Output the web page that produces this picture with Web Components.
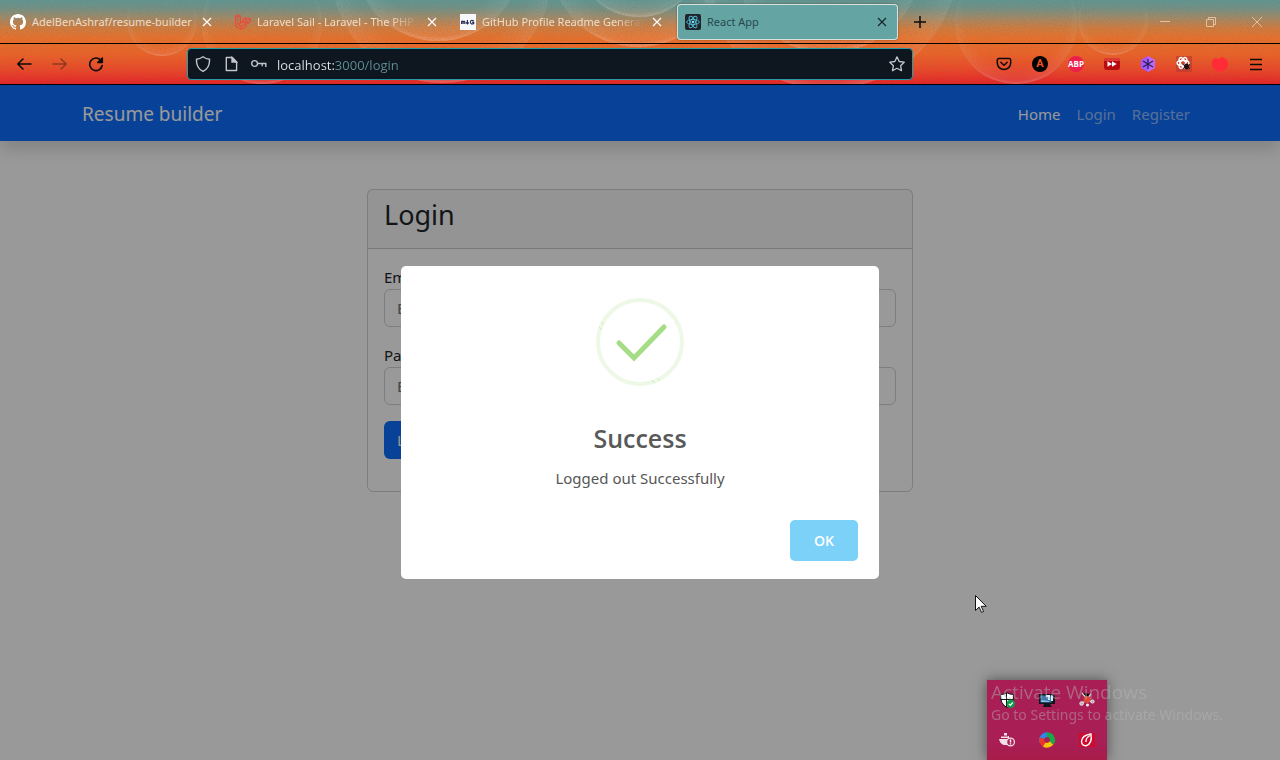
<!DOCTYPE html>
<html lang="en">
<head>
<meta charset="utf-8">
<title>React App</title>
<style>
  html, body { height: 100%; margin: 0; }
  body { font-family: "Noto Sans", "Open Sans", sans-serif; font-size: 15px; line-height: 24px; color: #212529; overflow: hidden; }
</style>
</head>
<body>
<browser-window>
  <browser-tab slot="tab" label="AdelBenAshraf/resume-builder">
    <svg slot="icon" viewBox="0 0 16 16" width="16" height="16"><path fill="#fff" d="M8 0C3.58 0 0 3.58 0 8c0 3.54 2.29 6.53 5.47 7.59.4.07.55-.17.55-.38v-1.49c-2.01.37-2.53-.49-2.69-.94-.09-.23-.48-.94-.82-1.13-.28-.15-.68-.52-.01-.53.63-.01 1.08.58 1.23.82.72 1.21 1.87.87 2.33.66.07-.52.28-.87.51-1.07-1.78-.2-3.64-.89-3.64-3.95 0-.87.31-1.59.82-2.15-.08-.2-.36-1.02.08-2.12 0 0 .67-.21 2.2.82a7.6 7.6 0 0 1 4 0c1.53-1.04 2.2-.82 2.2-.82.44 1.1.16 1.92.08 2.12.51.56.82 1.27.82 2.15 0 3.07-1.87 3.75-3.65 3.95.29.25.54.73.54 1.48v2.2c0 .21.15.46.55.38A8 8 0 0 0 16 8c0-4.42-3.58-8-8-8z"/></svg>
  </browser-tab>
  <browser-tab slot="tab" label="Laravel Sail - Laravel - The PHP" faded>
    <svg slot="icon" viewBox="0 0 16 16" width="16" height="16" fill="none" stroke="#f04438" stroke-width="1"><path d="M.6 2 3 .7 5.4 2v7L8 7.500V4.800l2.600-1.500M.6 2v10.400L6 15.400l5-2.900V9.700M.6 2 3 3.400 5.400 2M3 3.400v7.200l3 1.700v3M3 10.600l5-2.900 3 2M6 12.300l5-2.800M10.300 5l2.500-1.500L15.400 5v2.800L12.800 9.300 10.300 7.900zM10.300 5l2.500 1.400L15.400 5M12.800 6.400v2.900M11 9.700l-3-2"/></svg>
  </browser-tab>
  <browser-tab slot="tab" label="GitHub Profile Readme Generat" faded>
    <svg slot="icon" viewBox="0 0 16 16" width="16" height="16"><path fill="#f6f7fb" d="M0 0h16v16H0z"/><path fill="none" stroke="#2b2f55" stroke-width="1.200" d="M1.600 10V7.200M1.600 7.600q1.400-1 1.500.4v2M3.100 8q1.500-1.400 1.700 0v2M7.400 6v4M6.100 8.500l1.300 1.400 1.300-1.400M13.800 6.900q-3.300-1.500-3.400 1.200 0 2.500 3.300 1.500V8.300h-1.500"/></svg>
  </browser-tab>
  <browser-tab slot="tab" label="React App" active>
    <svg slot="icon" viewBox="0 0 16 16" width="16" height="16" fill="none" stroke="#53bcd8" stroke-width=".9"><rect width="16" height="16" rx="2" fill="#20232a" stroke="none"/><ellipse cx="8" cy="8" rx="6.400" ry="2.500"/><ellipse cx="8" cy="8" rx="6.400" ry="2.500" transform="rotate(60 8 8)"/><ellipse cx="8" cy="8" rx="6.400" ry="2.500" transform="rotate(120 8 8)"/><circle cx="8" cy="8" r="1.300" fill="#7fe3f7" stroke="none"/></svg>
  </browser-tab>
  <address-bar slot="address" value="localhost:3000/login"></address-bar>
  <login-page></login-page>
  <alert-dialog slot="overlay" heading="Success" message="Logged out Successfully"></alert-dialog>
</browser-window>
<tray-popup></tray-popup>
<activation-notice></activation-notice>
<mouse-pointer></mouse-pointer>

<script>
const define = (name, html, setup) => {
  const template = document.createElement('template');
  template.innerHTML = html;
  customElements.define(name, class extends HTMLElement {
    constructor() {
      super();
      this.attachShadow({ mode: 'open' }).append(template.content.cloneNode(true));
    }
    connectedCallback() { if (setup) setup(this, this.shadowRoot); }
  });
};

define('theme-art', `
<style>
  :host { display: block; position: absolute; inset: 0; overflow: hidden; z-index: -1;
    background: linear-gradient(#5c9795 0, #6f9287 8px, #a08a67 18px, #cf7c3e 28px, #e8702a 38px, #ec6226 54px, #eb4a27 68px, #e82327 84px); }
  svg { display: block; }
</style>
<svg width="1280" height="85" aria-hidden="true">
  <defs>
    <radialGradient id="b" cx=".5" cy=".42" r=".58">
      <stop offset=".75" stop-color="#fff" stop-opacity="0"/>
      <stop offset=".95" stop-color="#fff" stop-opacity=".09"/>
      <stop offset="1" stop-color="#fff" stop-opacity=".28"/>
    </radialGradient>
    <filter id="n" x="0" y="0" width="100%" height="100%">
      <feTurbulence type="fractalNoise" baseFrequency=".7" numOctaves="2"/>
      <feColorMatrix values="0 0 0 0 .3  0 0 0 0 .15  0 0 0 0 .1  1.200 0 0 0 -.5"/>
    </filter>
  </defs>
  <g fill="url(#b)">
    <circle cx="162" cy="21" r="35"/><circle cx="262" cy="24" r="60"/>
    <circle cx="442" cy="-27" r="110"/><circle cx="438" cy="-43" r="84"/>
    <circle cx="639" cy="-47" r="64"/><circle cx="638" cy="-41" r="88"/>
    <circle cx="828" cy="-42" r="131"/><circle cx="828" cy="-42" r="95"/>
    <circle cx="1016" cy="23" r="61"/><circle cx="1113" cy="20" r="35"/>
  </g>
  <rect width="1280" height="85" filter="url(#n)" opacity=".7"/>
</svg>`);

define('browser-window', `
<style>
  :host { display: flex; flex-direction: column; min-height: 100vh; }
  header { position: relative; z-index: 0; }
  .tabs { display: flex; align-items: center; height: 43px; border-bottom: 1px solid #000; }
  .tools { display: flex; align-items: center; height: 40px; padding: 0 6px; border-bottom: 1px solid #000; }
  .view { position: relative; flex: 1; display: flex; flex-direction: column; background: #fff; }
  .grow { flex: 1; }
  slot[name=address] { display: block; flex: 1; margin: 0 73px; }
  button { display: grid; place-items: center; padding: 0; border: 0; background: none; width: 36px; height: 36px; color: #0b0b0b; }
  .new { width: 40px; }
  .win button { width: 46px; color: #e3c1a0; }
  .win { display: flex; }
  svg { display: block; fill: none; stroke: currentColor; }
  svg.solid { stroke: none; }
  .abp { width: 16px; height: 16px; border-radius: 8px; background: #ed1e4c; color: #fff; font: 700 8px/16px "Open Sans", sans-serif; display: flex; justify-content: center; }
  .ang { width: 16px; height: 16px; border-radius: 8px; background: #000; color: #f0522a; font: 700 11px/16px Roboto, sans-serif; }
</style>
<header>
  <theme-art></theme-art>
  <div class="tabs">
    <slot name="tab"></slot>
    <button class="new" aria-label="New tab"><svg width="14" height="14" stroke-width="1.500"><path d="M7 1v12M1 7h12"/></svg></button>
    <span class="grow"></span>
    <div class="win">
      <button aria-label="Minimize"><svg width="12" height="12"><path d="M1 5.500h10"/></svg></button>
      <button aria-label="Restore"><svg width="12" height="12"><path d="M1.500 3.500h7v7h-7zM3.500 3V1.500h7v7H9"/></svg></button>
      <button aria-label="Close"><svg width="12" height="12"><path d="M1 1l10 10M11 1 1 11"/></svg></button>
    </div>
  </div>
  <div class="tools">
    <button aria-label="Back"><svg width="16" height="16" stroke-width="1.600" stroke-linecap="round" stroke-linejoin="round"><path d="M15 8H2M7 3 1.800 8 7 13"/></svg></button>
    <button aria-label="Forward" style="color:#8d3a1d"><svg width="16" height="16" stroke-width="1.500" stroke-linecap="round" stroke-linejoin="round"><path d="M1 8h13M9 3l5.200 5L9 13"/></svg></button>
    <button aria-label="Reload"><svg width="16" height="16" stroke-width="1.600" stroke-linecap="round"><path d="M14.200 9.500A6.300 6.300 0 1 1 12.600 4"/><path d="M14.300 2v4.500H9.800z" fill="currentColor" stroke-linejoin="round"/></svg></button>
    <slot name="address"></slot>
    <button aria-label="Save to Pocket"><svg width="16" height="16" stroke-width="1.500" stroke-linecap="round" stroke-linejoin="round"><path d="M3 2.500h10q1.700 0 1.700 1.700V7A6.700 6.500 0 0 1 1.300 7V4.200q0-1.700 1.700-1.700zM4.800 6.300 8 9.300l3.200-3"/></svg></button>
    <button aria-label="Extension A"><span class="ang">A</span></button>
    <button aria-label="Adblock Plus"><span class="abp">ABP</span></button>
    <button aria-label="Fast forward"><svg class="solid" width="16" height="16"><rect y="2" width="16" height="12" rx="3" fill="#b80c10"/><path fill="#dc3a36" d="M3 2h10q3 0 3 3H0q0-3 3-3z"/><path fill="#fff" d="M3.500 5.200 8 8l-4.500 2.800zM8 5.200 12.700 8 8 10.800z"/></svg></button>
    <button aria-label="Extension hexagon"><svg class="solid" width="16" height="16"><path fill="#a457fa" d="M8 0l7 4v8l-7 4-7-4V4z"/><path fill="#d77af5" d="M8 0l7 4v8l-7 4z" opacity=".5"/><path stroke="#28205a" stroke-width="1.300" d="M8 3v10M3 5l10 6M13 5 3 11"/></svg></button>
    <button aria-label="React developer tools"><svg class="solid" width="16" height="16"><path fill="#b33b32" opacity=".6" d="M0 0h16v16H0z"/><g fill="none" stroke="#fff" stroke-width="1.400"><ellipse cx="7" cy="7" rx="6" ry="2.500"/><ellipse cx="7" cy="7" rx="6" ry="2.500" transform="rotate(60 7 7)"/><ellipse cx="7" cy="7" rx="6" ry="2.500" transform="rotate(120 7 7)"/></g><ellipse cx="10.500" cy="10.500" rx="2.400" ry="3" fill="#20100f"/><path stroke="#20100f" d="M7 8.500l7 4M14 8.500l-7 4"/></svg></button>
    <button aria-label="Extension"><svg class="solid" width="16" height="16"><path fill="#ff2b36" d="M1 3l3-1 3 1 3-2 4 2q4 5 0 10-6 5-12 0-4-4-1-10z"/></svg></button>
    <button aria-label="Menu"><svg width="14" height="14" stroke-width="1.300"><path d="M1 2.500h12M1 7.500h12M1 12.500h12"/></svg></button>
  </div>
</header>
<div class="view"><slot></slot><slot name="overlay"></slot></div>`);

define('browser-tab', `
<style>
  :host { display: block; flex: 0 1 225px; min-width: 0; color: #f0dcc6; }
  .tab { display: flex; align-items: center; gap: 6px; height: 36px; margin: 0 2px; padding: 0 8px; box-sizing: border-box; border-radius: 4px; }
  :host([active]) { color: #27484c; }
  :host([active]) .tab { background: #64a5a4; box-shadow: inset 0 0 0 1px #d9e0dd, 0 0 2px #0006; }
  .label { flex: 1; min-width: 0; white-space: nowrap; font-size: 11px; line-height: 20px; }
  :host([faded]) .label { -webkit-mask-image: linear-gradient(to left, transparent, #000 28px); mask-image: linear-gradient(to left, transparent, #000 28px); }
  button { display: grid; place-items: center; width: 16px; height: 16px; padding: 0; border: 0; background: none; color: #fff; }
  :host([active]) button { color: #16282a; }
</style>
<div class="tab"><slot name="icon"></slot><span class="label"></span>
<button aria-label="Close tab"><svg width="10" height="10" fill="none" stroke="currentColor" stroke-width="1.200"><path d="M1 1l8 8M9 1 1 9"/></svg></button></div>`,
(el, root) => { root.querySelector('.label').textContent = el.getAttribute('label'); });

define('address-bar', `
<style>
  :host { display: block; }
  .bar { display: flex; align-items: center; gap: 12px; height: 32px; box-sizing: border-box; padding: 0 7px; border: 1px solid #269ba8; border-radius: 4px; background: #0e1620; color: #c3c6ca; }
  svg { display: block; fill: none; stroke: currentColor; flex: none; }
  input { flex: 1; min-width: 0; height: 28px; padding: 2px 0 0; box-sizing: border-box; margin: 0 0 0 -2px; border: 0; outline: 0; font: 13px "Open Sans", sans-serif;
    color: #5f8f95; background: linear-gradient(to right, #e4e6e8 58px, #5f8f95 58px); -webkit-background-clip: text; background-clip: text; -webkit-text-fill-color: transparent; }
</style>
<div class="bar">
  <svg width="16" height="16" stroke-width="1.400"><path d="M8 .8Q11 3 14.500 3.300 15 12 8 15.300 1 12 1.500 3.300 5 3 8 .8z"/></svg>
  <svg width="16" height="16" stroke-width="1.400"><path d="M3.300 1.500h6L13.600 6v8.500H3.300z" stroke-linejoin="round"/><path d="M9 1.500V6h4.500z" fill="currentColor"/></svg>
  <svg width="16" height="16" stroke-width="1.400"><circle cx="3.600" cy="7.500" r="2.900"/><path d="M6.500 7.500h9M11.200 7.500v2.700M14.800 7.500v3.400"/></svg>
  <input type="text" aria-label="Address" spellcheck="false">
  <svg width="16" height="16" stroke-width="1.300" stroke-linejoin="round"><path d="M8 .9l2.200 4.600 5 .7-3.600 3.500.9 5L8 12.300l-4.500 2.400.9-5L.8 6.200l5-.7z"/></svg>
</div>`, (el, root) => { root.querySelector('input').value = el.getAttribute('value'); });

define('login-page', `
<style>
  :host { display: block; }
  nav { background: #0d6efd; box-shadow: 0 8px 16px rgba(0,0,0,.15); }
  .container { max-width: 1116px; margin: 0 auto; padding: 2px 12px 0; display: flex; align-items: center; justify-content: space-between; height: 54px; }
  a { color: rgba(255,255,255,.55); text-decoration: none; }
  .brand { color: #fff; font-size: 19px; line-height: 30px; }
  .links { display: flex; gap: 16px; padding: 0 8px; }
  .links a[aria-current] { color: #fff; }
  .card { width: 50%; max-width: 546px; box-sizing: border-box; margin: 48px auto 0; border: 1px solid rgba(0,0,0,.18); border-radius: 6px; }
  .head { background: rgba(0,0,0,.03); border-bottom: 1px solid rgba(0,0,0,.18); padding: 8px 16px 16px; }
  h3 { margin: 0; font-size: 27px; font-weight: 400; line-height: 34px; }
  form { padding: 16px; }
  label { display: block; color: #212529; }
  input { display: block; width: 100%; box-sizing: border-box; height: 38px; margin: 0 0 16px; padding: 6px 12px; border: 1px solid #ced4da; border-radius: 6px; font: inherit; background: none; }
  input::placeholder { color: #6c757d; }
  button { display: block; height: 38px; padding: 0 13px; margin: 0 0 16px; border: 0; border-radius: 6px; background: #0d6efd; color: #fff; font: inherit; }
</style>
<nav><div class="container">
  <a class="brand" href="#">Resume builder</a>
  <div class="links"><a href="#" aria-current="page">Home</a><a href="#login">Login</a><a href="#register">Register</a></div>
</div></nav>
<section class="card">
  <div class="head"><h3>Login</h3></div>
  <form onsubmit="return false">
    <label for="email">Email</label>
    <input id="email" type="email" placeholder="E">
    <label for="password">Password</label>
    <input id="password" type="password" placeholder="E">
    <button>Login</button>
  </form>
</section>`);

define('alert-dialog', `
<style>
  :host { position: absolute; inset: 0; display: grid; place-items: center; background: rgba(0,0,0,.4); }
  .modal { width: 478px; max-width: 90%; box-sizing: border-box; padding-top: 32px; background: #fff; border-radius: 5px; text-align: center; }
  svg { display: block; margin: 0 auto; }
  h2 { margin: 32px 0 0; font: 600 25px/40px "Open Sans", sans-serif; color: #595959; }
  p { margin: 8px 0 0; color: #575757; }
  footer { display: flex; justify-content: flex-end; padding: 30px 21px 18px; }
  button { height: 41px; width: 68px; padding: 0; border: 0; border-radius: 5px; background: #7cd1f9; color: #fff; font: 600 14px/20px "Open Sans", sans-serif; }
</style>
<div class="modal" role="dialog" aria-labelledby="t">
  <svg width="88" height="88" fill="none" aria-hidden="true">
    <circle cx="44" cy="44" r="42" stroke="#edf8e7" stroke-width="4"/>
    <path stroke="#b9e3a4" stroke-width=".6" d="M5 24l3 3M3 29l3 3M56 82l3 3M61 80l3 3"/>
    <path stroke="#a5dc86" stroke-width="5" stroke-linecap="round" d="M23 45l15 15 30-31"/>
  </svg>
  <h2 id="t"></h2>
  <p></p>
  <footer><button>OK</button></footer>
</div>`, (el, root) => {
  root.querySelector('h2').textContent = el.getAttribute('heading');
  root.querySelector('p').textContent = el.getAttribute('message');
});

define('tray-popup', `
<style>
  :host { position: fixed; right: 173px; bottom: 0; display: grid; grid-template: 40px 40px / 40px 40px 40px; place-items: center;
    background: linear-gradient(#a81e55 64px, #a81c48); box-shadow: 0 0 0 1px #7777, 0 0 12px rgba(0,0,0,.5); }
  svg { display: block; }
</style>
<svg width="16" height="16"><path fill="#fff" stroke="#111" stroke-width="1" d="M8 .8q3 1.700 6.500 1.700Q15 12 8 15.500 1 12 1.500 2.500 5 2.500 8 .8z"/><path stroke="#111" stroke-width="1" d="M7.500 1v14M1.500 7.500h13"/><circle cx="11.800" cy="11.800" r="4.200" fill="#109a4c"/><path fill="none" stroke="#fff" stroke-width="1.200" d="M9.800 11.800l1.500 1.500 2.500-2.800"/></svg>
<svg width="16" height="16"><path fill="#10161d" d="M0 2h14l2 2v8H0zM5 12h6l2 3H4z"/><path fill="#3a78ad" d="M1.500 3.500h11v7h-11z"/><path fill="#d9eefa" d="M7 3h4v5H9V5H7zM12 3l2 1v5h-2z"/><path fill="#8abfe0" d="M2 8l8 1v1H2z"/></svg>
<svg width="16" height="16"><path stroke="#d4cfcd" stroke-width="1.400" d="M3 1l5 6 4-5M8 8l-5 3M8 8l5 2"/><circle cx="8" cy="7.500" r="3.400" fill="#dd4936"/><circle cx="2.600" cy="11.500" r="1.800" fill="#b7b0ab" stroke="#eee"/><circle cx="8.500" cy="13" r="1.500" fill="#eee"/><circle cx="13.500" cy="9.500" r="1.600" fill="#aaa" stroke="#eee"/></svg>
<svg width="16" height="16"><path fill="#f3dfe7" d="M5 1h3v3h2v3q-3 3-1 6H5Q1 12 0 7h2V4h3z"/><path stroke="#a81e55" d="M0 6.500h9M2 4h7"/><circle cx="11.500" cy="10" r="3.900" fill="#a81e55" stroke="#f3dfe7" stroke-width="1.300"/><path stroke="#fff" stroke-width="1.500" d="M11.500 7.500v3M11.500 11.300v1.200"/></svg>
<svg width="16" height="16" fill="none" stroke-width="5"><path stroke="#2d86e8" d="M3 10A5.400 5.400 0 0 1 8 2.700"/><path stroke="#19aa45" d="M8 2.700A5.300 5.300 0 0 1 12.500 11"/><path stroke="#f7c50c" d="M12.500 11Q9 14.500 5 12.500"/><path stroke="#e9382a" d="M5 12.500Q2 10 3 6"/><circle cx="8" cy="8" r="2.600" fill="#a81e55" stroke="none"/></svg>
<svg width="16" height="16"><path fill="#cf0a2c" d="M0 1h16v14H0z"/><path fill="none" stroke="#fff" stroke-width="1.400" d="M12 2Q3 3 2.500 9.500 3 14 7 13.700 13.500 12 12 2zM11 3.500Q6.500 6 7 10"/></svg>`);

define('activation-notice', `
<style>
  :host { position: fixed; right: 53px; bottom: 35px; width: 236px; color: rgba(185,185,185,.45); pointer-events: none; white-space: nowrap; }
  p { margin: 0; font-size: 14px; line-height: 20px; }
  .title { font: 19px/26px "Open Sans", sans-serif; }
</style>
<p class="title">Activate Windows</p><p>Go to Settings to activate Windows.</p>`);

define('mouse-pointer', `
<style>:host { position: fixed; left: 975px; top: 594px; } svg { display: block; }</style>
<svg width="13" height="20" aria-hidden="true"><path fill="#fff" stroke="#101018" d="M.5 1.500v15l3.600-3.400 2.500 5.300 2-.9-2.400-5.200h5z"/></svg>`);
</script>
</body>
</html>
